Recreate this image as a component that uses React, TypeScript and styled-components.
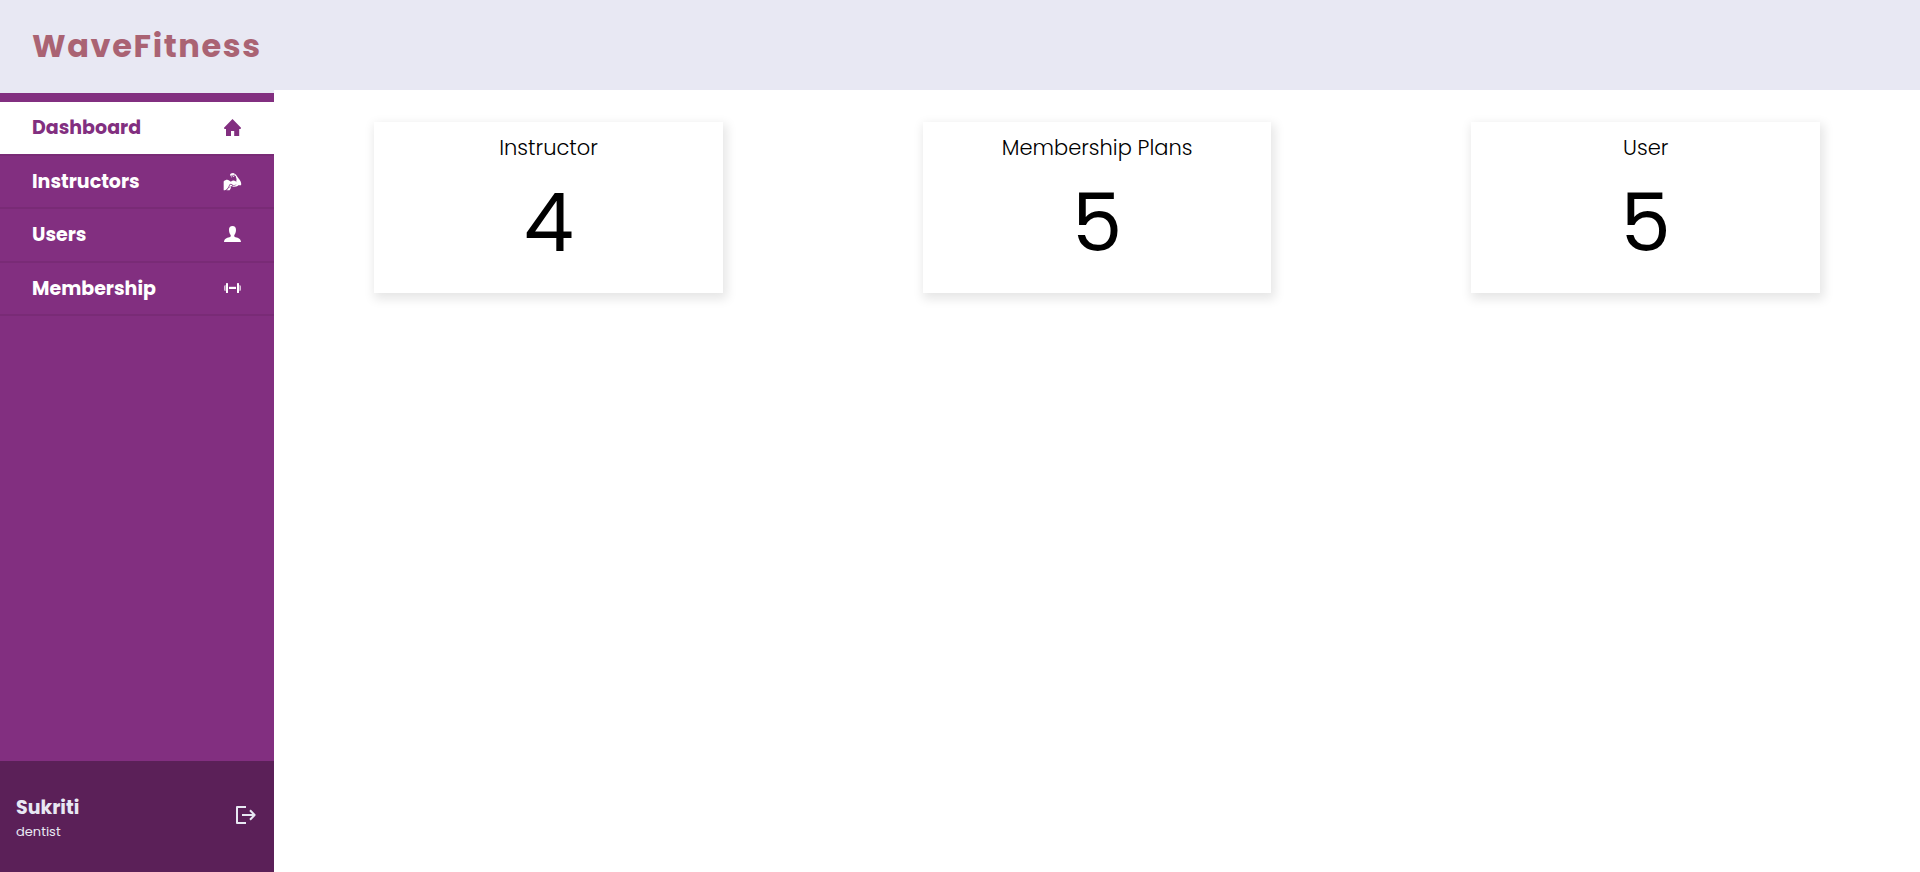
import React from "react";
import styled, { createGlobalStyle } from "styled-components";
import { GiBiceps } from "react-icons/gi";

const color = {
  lavender: "#e8e8f3",
  rose: "#aa6373",
  purple: "#822f80",
  purpleLine: "#792b76",
  plum: "#5b2058",
};

const GlobalStyle = createGlobalStyle`
  *, *::before, *::after { box-sizing: border-box; }
  body {
    margin: 0;
    background: #fff;
    color: #000;
    font-family: Poppins, Inter, "Liberation Sans", sans-serif;
  }
  h1, h2, p, ul { margin: 0; padding: 0; }
`;

const Page = styled.div`
  display: grid;
  grid-template-columns: 1fr 6fr;
  min-height: 100vh;
`;

const Sidebar = styled.aside`
  display: flex;
  flex-direction: column;
  background: ${color.purple};
`;

const Brand = styled.h1`
  display: flex;
  align-items: center;
  height: 93px;
  padding: 0 0 2px 32px;
  background: ${color.lavender};
  color: ${color.rose};
  font-size: 32px;
  font-weight: 700;
  line-height: 48px;
  letter-spacing: 0.05em;
  white-space: nowrap;
`;

const Nav = styled.nav`
  flex: 1;
  padding-top: 9px;
`;

const NavList = styled.ul`
  display: grid;
  grid-auto-rows: 1fr;
  height: 214px;
  list-style: none;
`;

const NavLink = styled.a<{ $active: boolean }>`
  display: flex;
  align-items: center;
  justify-content: space-between;
  height: 100%;
  padding: 0 32px;
  border-bottom: 2px solid ${color.purpleLine};
  background: ${(p) => (p.$active ? "#fff" : "transparent")};
  background-clip: padding-box;
  color: ${(p) => (p.$active ? color.purple : "#fff")};
  font-size: 19px;
  font-weight: 700;
  line-height: 29px;
  text-decoration: none;
`;

const IconSlot = styled.span`
  display: flex;
  align-items: center;
  justify-content: center;
  width: 19px;
  height: 19px;
`;

const Account = styled.footer`
  display: flex;
  align-items: center;
  justify-content: space-between;
  height: 111px;
  padding: 0 16px 2px;
  background: ${color.plum};
  color: ${color.lavender};
`;

const AccountName = styled.p`
  font-size: 19px;
  font-weight: 700;
  line-height: 31px;
`;

const AccountRole = styled.p`
  font-size: 13px;
  line-height: 17px;
`;

const LogoutButton = styled.button`
  display: flex;
  padding: 2px 2px 4px;
  border: 0;
  background: none;
  color: inherit;
  cursor: pointer;
`;

const TopBar = styled.header`
  height: 90px;
  background: ${color.lavender};
`;

const Cards = styled.main`
  display: grid;
  grid-template-columns: repeat(3, 1fr);
  padding-top: 32px;
`;

const Card = styled.section`
  margin: 0 100px;
  padding: 10px 0;
  background: #fff;
  box-shadow: 2px 4px 10px 2px rgba(0, 0, 0, 0.1);
  text-align: center;
`;

const CardTitle = styled.h2`
  font-size: 21px;
  font-weight: 300;
  line-height: 32px;
`;

const CardValue = styled.p`
  font-size: 80px;
  font-weight: 400;
  line-height: 119px;
`;

const HomeIcon = () => (
  <svg width="17" height="17" viewBox="0 0 17 17" fill="currentColor" aria-hidden="true">
    <path d="M8.5 0 17 8.7Q17.2 10 16 10H15.2V17H10.2V12H7V17H2V10H1Q-.2 10 0 8.7Z" />
  </svg>
);

const PersonIcon = () => (
  <svg width="17" height="17" viewBox="0 0 17 17" fill="currentColor" aria-hidden="true">
    <path d="M8.5 0C10.8 0 12.1 1.5 12 3.9C11.9 6.3 11.2 8 10.3 8.9C10.1 10.3 10.4 10.8 11.6 11.2C14.5 12 16.8 12.7 17 16H0C.2 12.7 2.5 12 5.4 11.2C6.6 10.8 6.9 10.3 6.7 8.9C5.8 8 5.1 6.3 5 3.9C4.9 1.5 6.2 0 8.5 0Z" />
  </svg>
);

const DumbbellIcon = () => (
  <svg width="17" height="10" viewBox="0 0 17 10" fill="currentColor" aria-hidden="true">
    <rect x="2" width="2" height="10" rx=".6" />
    <rect x="13" width="2" height="10" rx=".6" />
    <rect x="5" y="3.8" width="7" height="2.2" />
    <path opacity=".7" d="M1.6 2V8Q0 8 0 6.4V3.6Q0 2 1.6 2ZM15.4 2V8Q17 8 17 6.4V3.6Q17 2 15.4 2Z" />
  </svg>
);

const LogoutIcon = () => (
  <svg
    width="20"
    height="18"
    viewBox="0 0 20 18"
    fill="none"
    stroke="currentColor"
    strokeWidth="2"
    strokeLinejoin="round"
    aria-hidden="true"
  >
    <path d="M10 1H1V17H10M6 9H18.5M14 4.3 18.6 9 14 13.7" />
  </svg>
);

const navItems = [
  { label: "Dashboard", icon: <HomeIcon /> },
  { label: "Instructors", icon: <GiBiceps size={19} /> },
  { label: "Users", icon: <PersonIcon /> },
  { label: "Membership", icon: <DumbbellIcon /> },
];

const stats = [
  { title: "Instructor", value: 4 },
  { title: "Membership Plans", value: 5 },
  { title: "User", value: 5 },
];

export default function App() {
  return (
    <>
      <GlobalStyle />
      <Page>
        <Sidebar>
          <Brand>WaveFitness</Brand>
          <Nav>
            <NavList>
              {navItems.map((item, i) => (
                <li key={item.label}>
                  <NavLink href="#" $active={i === 0} aria-current={i === 0 ? "page" : undefined}>
                    {item.label}
                    <IconSlot>{item.icon}</IconSlot>
                  </NavLink>
                </li>
              ))}
            </NavList>
          </Nav>
          <Account>
            <div>
              <AccountName>Sukriti</AccountName>
              <AccountRole>dentist</AccountRole>
            </div>
            <LogoutButton type="button" aria-label="Log out">
              <LogoutIcon />
            </LogoutButton>
          </Account>
        </Sidebar>
        <div>
          <TopBar />
          <Cards>
            {stats.map((stat) => (
              <Card key={stat.title}>
                <CardTitle>{stat.title}</CardTitle>
                <CardValue>{stat.value}</CardValue>
              </Card>
            ))}
          </Cards>
        </div>
      </Page>
    </>
  );
}
